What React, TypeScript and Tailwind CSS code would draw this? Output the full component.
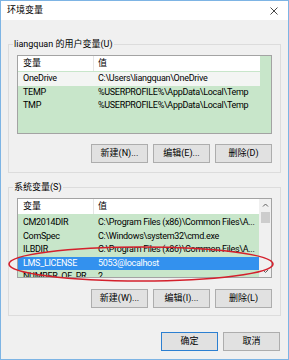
import React from 'react';

type Row = { name: string; value: string; state?: 'selected' | 'inactive' };

const userVars: Row[] = [
    { name: 'OneDrive', value: 'C:\\Users\\liangquan\\OneDrive', state: 'inactive' },
    { name: 'TEMP', value: '%USERPROFILE%\\AppData\\Local\\Temp' },
    { name: 'TMP', value: '%USERPROFILE%\\AppData\\Local\\Temp' },
];

const systemVars: Row[] = [
    { name: 'CM2014DIR', value: 'C:\\Program Files (x86)\\Common Files\\A...' },
    { name: 'ComSpec', value: 'C:\\Windows\\system32\\cmd.exe' },
    { name: 'ILBDIR', value: 'C:\\Program Files (x86)\\Common Files\\A...' },
    { name: 'LMS_LICENSE', value: '5053@localhost', state: 'selected' },
    { name: 'NUMBER_OF_PR...', value: '2' },
];

const font = "font-['Roboto','Noto_Sans_CJK_SC',sans-serif]";

const VarRow: React.FC<{ row: Row }> = ({ row }) => {
    const bg =
        row.state === 'selected'
            ? 'bg-[#3391ee] text-white'
            : row.state === 'inactive'
            ? 'bg-[#f3f5f3] text-black'
            : 'text-black';
    return (
        <div className={`flex h-[13.5px] shrink-0 items-center text-[9px] leading-[13px] tracking-[-0.3px] whitespace-nowrap ${bg}`}>
            <span className="w-[80px] shrink-0 pl-[5px]">{row.name}</span>
            <span>{row.value}</span>
        </div>
    );
};

const ListHeader: React.FC = () => (
    <div className="flex h-[15px] shrink-0 items-center bg-white text-[9px] text-black">
        <span className="flex h-full w-[76px] items-center border-r border-[#e5e5e5] pl-[5px]">变量</span>
        <span className="pl-[4px]">值</span>
    </div>
);

const Button: React.FC<{ label: string; primary?: boolean }> = ({ label, primary }) => (
    <button
        className={`flex h-[19px] w-[57px] items-center justify-center bg-[#e1e1e1] text-[9px] text-black ${
            primary ? 'border-[1.5px] border-[#2c7fd1]' : 'border border-[#adadad]'
        }`}
    >
        {label}
    </button>
);

const App: React.FC = () => {
    return (
        <div className={`relative flex h-[360px] w-[289px] flex-col overflow-hidden border border-[#7db4e4] bg-[#f0f0f0] ${font}`}>
            {/* title bar */}
            <div className="flex h-[19px] shrink-0 items-center justify-between bg-white pl-[6px] pr-[10px]">
                <span className="text-[9px] text-black">环境变量</span>
                <svg width="8" height="8" viewBox="0 0 8 8" className="text-[#333]">
                    <path d="M0.5 0.5L7.5 7.5M7.5 0.5L0.5 7.5" stroke="currentColor" strokeWidth="0.9" />
                </svg>
            </div>

            <div className="flex flex-col px-[7px] pt-[18px]">
                {/* user variables */}
                <fieldset className="border border-[#dcdcdc] px-[8px] pb-[9px]">
                    <legend className="-ml-[4px] px-[1px] text-[9px] leading-[12px] text-black">liangquan 的用户变量(U)</legend>
                    <div className="mt-[5px] flex h-[79px] flex-col border border-[#a3a3a3] bg-[#c8e6ca]">
                        <div className="mr-[11px]">
                            <ListHeader />
                        </div>
                        <div className="mt-[1px] mr-[11px] flex flex-col">
                            {userVars.map(r => (
                                <VarRow key={r.name} row={r} />
                            ))}
                        </div>
                    </div>
                    <div className="mt-[10px] flex justify-end gap-[5px]">
                        <Button label="新建(N)..." />
                        <Button label="编辑(E)..." />
                        <Button label="删除(D)" />
                    </div>
                </fieldset>

                {/* system variables */}
                <fieldset className="mt-[8px] border border-[#dcdcdc] px-[8px] pb-[7px]">
                    <legend className="-ml-[4px] px-[1px] text-[9px] leading-[12px] text-black">系统变量(S)</legend>
                    <div className="mt-[5px] flex h-[80px] border border-[#a3a3a3] bg-[#c8e6ca]">
                        <div className="flex min-w-0 flex-1 flex-col overflow-hidden">
                            <ListHeader />
                            <div className="mt-[2px] flex flex-col">
                                {systemVars.map(r => (
                                    <VarRow key={r.name} row={r} />
                                ))}
                            </div>
                        </div>
                        {/* scrollbar */}
                        <div className="flex w-[12px] shrink-0 flex-col items-center bg-[#f0f0f0]">
                            <svg width="7" height="12" viewBox="0 0 7 12" className="text-[#606060]">
                                <path d="M1 7.5L3.5 5L6 7.5" fill="none" stroke="currentColor" strokeWidth="1" />
                            </svg>
                            <div className="mt-[1px] h-[11px] w-[9px] bg-[#cdcdcd]" />
                            <div className="flex-1" />
                            <svg width="7" height="10" viewBox="0 0 7 10" className="text-[#606060]">
                                <path d="M1 3L3.5 5.5L6 3" fill="none" stroke="currentColor" strokeWidth="1" />
                            </svg>
                        </div>
                    </div>
                    <div className="mt-[11px] flex justify-end gap-[5px]">
                        <Button label="新建(W)..." />
                        <Button label="编辑(I)..." />
                        <Button label="删除(L)" />
                    </div>
                </fieldset>

                <div className="mt-[16px] flex justify-end gap-[5px] pr-[1px]">
                    <Button label="确定" primary />
                    <Button label="取消" />
                </div>
            </div>

            {/* red marker ellipse */}
            <svg className="pointer-events-none absolute left-0 top-0" width="289" height="360">
                <ellipse cx="140" cy="263" rx="132" ry="17" fill="none" stroke="#d4202c" strokeWidth="1.6" />
            </svg>
        </div>
    );
};

export default App;
